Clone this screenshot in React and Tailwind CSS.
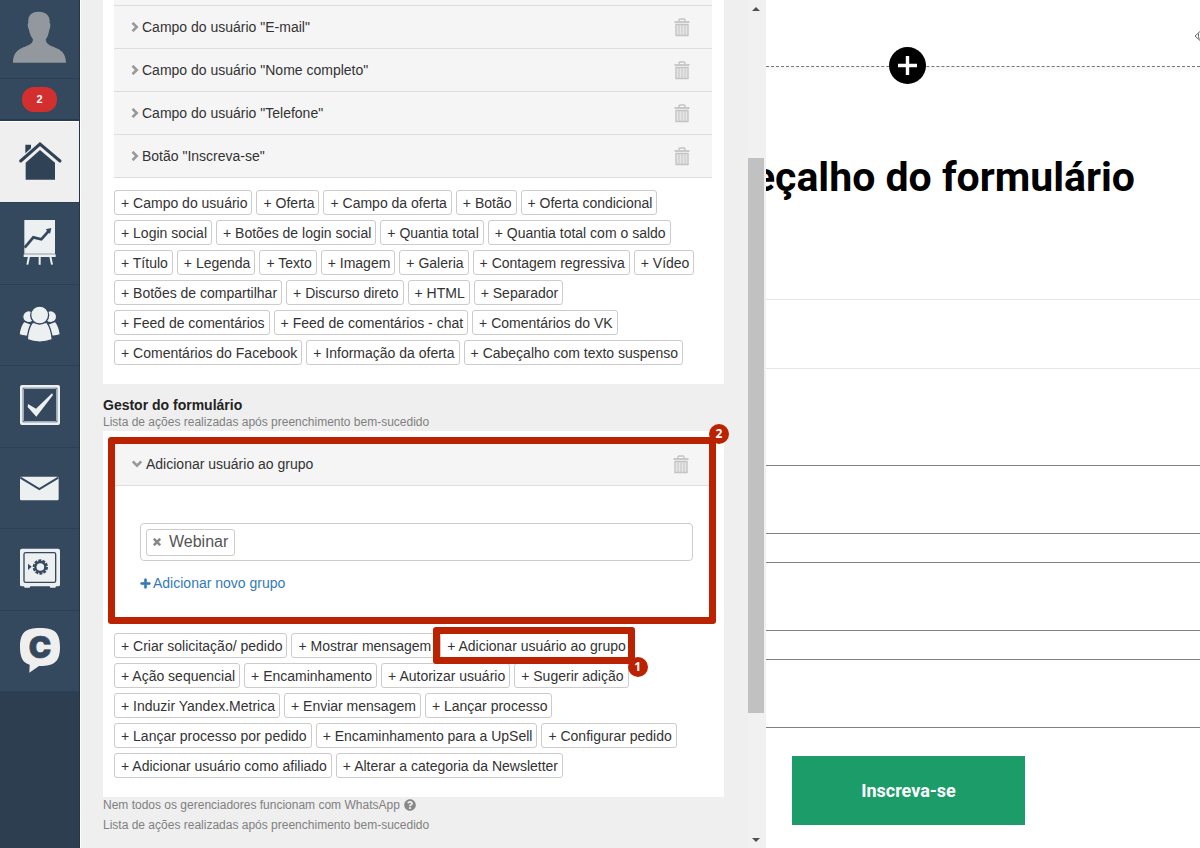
import { useState } from "react";
import { FaPlus, FaQuestionCircle } from "react-icons/fa";

const fields = [
  'Campo do usuário "E-mail"',
  'Campo do usuário "Nome completo"',
  'Campo do usuário "Telefone"',
  'Botão "Inscreva-se"',
];

const blockRows = [
  ["Campo do usuário", "Oferta", "Campo da oferta", "Botão", "Oferta condicional"],
  ["Login social", "Botões de login social", "Quantia total", "Quantia total com o saldo"],
  ["Título", "Legenda", "Texto", "Imagem", "Galeria", "Contagem regressiva", "Vídeo"],
  ["Botões de compartilhar", "Discurso direto", "HTML", "Separador"],
  ["Feed de comentários", "Feed de comentários - chat", "Comentários do VK"],
  ["Comentários do Facebook", "Informação da oferta", "Cabeçalho com texto suspenso"],
];

const handlerRows = [
  ["Criar solicitação/ pedido", "Mostrar mensagem", "Adicionar usuário ao grupo"],
  ["Ação sequencial", "Encaminhamento", "Autorizar usuário", "Sugerir adição"],
  ["Induzir Yandex.Metrica", "Enviar mensagem", "Lançar processo"],
  ["Lançar processo por pedido", "Encaminhamento para a UpSell", "Configurar pedido"],
  ["Adicionar usuário como afiliado", "Alterar a categoria da Newsletter"],
];

// Sidebar icons share one 240x243 canvas, the shape of a menu cell
const HomeIcon = () => (
  <>
    <path d="M76 71h17v11l-17 15z" fill="#2f4256" />
    <path d="M77 176v-51l43-38 45 38v51z" fill="#2f4256" />
    <path d="M62 120l58-51 60 51" fill="none" stroke="#2f4256" strokeWidth="9" strokeLinecap="round" />
  </>
);

const ChartIcon = () => (
  <>
    <path d="M73 54h92v101H73zM71 157h96v8H71z" fill="#ecf0f1" />
    <path d="M87 163l-5 25M119 163v25M151 163l5 25" stroke="#ecf0f1" strokeWidth="6" />
    <path d="M74 137l26-31 24 6 22-25" fill="none" stroke="#34495e" strokeWidth="8" />
    <path d="M137 82l17-4-4 18z" fill="#34495e" />
  </>
);

const UsersIcon = () => (
  <g fill="#ecf0f1" stroke="#34495e" strokeWidth="4">
    <circle cx="86" cy="98" r="18" />
    <circle cx="152" cy="98" r="18" />
    <path d="M72 112c-9 10-13 24-15 40 9 4 18 5 27 4l10-36z" />
    <path d="M166 112c9 10 13 24 15 40-9 4-18 5-27 4l-10-36z" />
    <path d="M97 116c-9 12-14 31-15 51 22 9 52 9 75 0-2-20-7-39-16-51z" />
    <circle cx="119" cy="93" r="27" />
  </g>
);

const CheckIcon = () => (
  <>
    <rect x="64" y="64" width="112" height="112" rx="2" fill="none" stroke="#ecf0f1" strokeWidth="8" />
    <rect x="70" y="70" width="100" height="100" rx="4" fill="none" stroke="#b4bec7" strokeWidth="3" />
    <path d="M84 117l24 14 48-46 3 5-50 65-26-29z" fill="#ecf0f1" />
  </>
);

const MailIcon = () => (
  <>
    <rect x="60" y="89" width="116" height="71" rx="4" fill="#ecf0f1" />
    <path d="M61 92l57 34 57-34" fill="none" stroke="#34495e" strokeWidth="6" />
  </>
);

const SafeIcon = () => (
  <>
    <path d="M66 62h108q6 0 6 6v102q0 5-5 5h-7l-2 4h-15l-2-4H91l-2 4H74l-2-4h-7q-5 0-5-5V68q0-6 6-6z" fill="#ecf0f1" />
    <rect x="72" y="74" width="95" height="89" rx="5" fill="none" stroke="#34495e" strokeWidth="4" />
    <circle cx="121" cy="117" r="15" fill="none" stroke="#34495e" strokeWidth="7" />
    <circle cx="121" cy="117" r="20" fill="none" stroke="#34495e" strokeWidth="6" strokeDasharray="9 3.5" />
    <path d="M84 107l11 9-11 10z" fill="#34495e" />
  </>
);

const ChatIcon = () => (
  <>
    <path d="M120 54c44 0 60 14 60 57s-16 57-60 57h-3l-29 20 1-24c-21-6-29-22-29-53 0-43 16-57 60-57z" fill="#efefef" />
    <text x="120" y="144" textAnchor="middle" fontFamily="Inter, sans-serif" fontWeight="900" fontSize="90" fill="#34495e" stroke="#34495e" strokeWidth="2">C</text>
  </>
);

const menu = [
  { label: "Início", Icon: HomeIcon, active: true },
  { label: "Estatísticas", Icon: ChartIcon },
  { label: "Usuários", Icon: UsersIcon },
  { label: "Tarefas", Icon: CheckIcon },
  { label: "Mensagens", Icon: MailIcon },
  { label: "Pagamentos", Icon: SafeIcon },
  { label: "Chat", Icon: ChatIcon },
];

const Sidebar = () => (
  <aside className="w-20 shrink-0 bg-[#2d3e50] border-r border-[#22354a]">
    <a href="#perfil" aria-label="Perfil" className="block h-[79px] bg-[#34495e] border-b border-[#2c3f53]">
      <svg viewBox="0 0 240 234" className="w-20 h-[78px]">
        <path
          d="M115 35c-22 0-32 13-30 34-3 2-2 12 2 20 2 12 6 21 12 29 0 8-4 13-14 18-22 10-45 14-46 52h159c-1-38-26-42-46-51-9-4-14-11-15-18 6-9 9-18 11-30 4-8 4-18 1-20 2-21-10-34-34-34z"
          fill="#92989d"
        />
      </svg>
    </a>
    <a href="#avisos" className="flex h-[42px] items-center justify-center bg-[#34495e] border-b-2 border-[#263a50]">
      <span className="flex h-[25px] w-[35px] items-center justify-center rounded-xl bg-[#d32f2f] text-[11px] font-bold text-white">2</span>
    </a>
    <nav className="flex h-[570px] flex-col">
      {menu.map(({ label, Icon, active }) => (
        <a
          key={label}
          href="#menu"
          aria-label={label}
          className={
            active
              ? "block flex-1 border-t border-white bg-[#efefef]"
              : "block flex-1 border-t border-[#2c3f53] bg-[#34495e]"
          }
        >
          <svg viewBox="0 3 240 240" className="size-20">
            <Icon />
          </svg>
        </a>
      ))}
    </nav>
  </aside>
);

const Trash = () => (
  <button type="button" aria-label="Excluir" className="text-[#c4c4c4]">
    <svg viewBox="0 0 16 19" className="h-[19px] w-4" fill="none" stroke="currentColor">
      <path d="M5 3.500V2q0-1 1-1h4q1 0 1 1v1.500" strokeWidth="1.4" />
      <path d="M0.500 4h15" strokeWidth="1.8" />
      <path d="M2 6.500h12v11h-12z" fill="#e6e6e6" strokeWidth="1.4" />
      <path d="M5 6.500v11M8 6.500v11M11 6.500v11" strokeWidth="1" />
    </svg>
  </button>
);

const Chevron = ({ open }) => (
  <svg viewBox="0 0 10 10" className={open ? "size-2.5 rotate-90" : "size-2.5"} fill="none" stroke="#999" strokeWidth="2.6">
    <path d="M2.500 0.800l4.200 4.200-4.200 4.200" />
  </svg>
);

// Red frame with a step number; the parent places both
const Marker = ({ step, frame, badge }) => (
  <div className={`pointer-events-none absolute z-10 rounded-[3px] border-7 border-[#bb2200] ${frame}`}>
    <span className={`absolute flex size-5 items-center justify-center rounded-full bg-[#bb2200] font-['Open_Sans',sans-serif] text-xs font-bold text-white ${badge}`}>
      {step}
    </span>
  </div>
);

const AddButton = ({ label }) => (
  <button type="button" className="h-[25px] rounded-[3px] border border-[#ccc] bg-white pr-1 pl-1.5 text-sm leading-5 whitespace-nowrap">
    + {label}
  </button>
);

const ButtonRows = ({ rows, marked }) => (
  <div className="flex flex-col gap-[5px]">
    {rows.map((row, i) => (
      <div key={i} className="flex gap-1">
        {row.map((label) =>
          label === marked ? (
            <div key={label} className="relative flex">
              <AddButton label={label} />
              <Marker step="1" frame="-inset-y-1.5 -left-[7px] -right-1" badge="-right-5 -bottom-5" />
            </div>
          ) : (
            <AddButton key={label} label={label} />
          )
        )}
      </div>
    ))}
  </div>
);

const Editor = () => {
  const [groups, setGroups] = useState(["Webinar"]);

  return (
    <main className="flex-1 pl-[22px] pr-6 text-[#333]">
      <section className="bg-white pt-0 pb-[19px] pl-[11px] pr-3">
        <div className="h-1.5 border-b border-[#ddd] bg-[#f5f5f5]" />
        {fields.map((f) => (
          <div key={f} className="flex h-[43px] items-center gap-0.5 border-b border-[#ddd] bg-[#f5f5f5] pl-4 pr-[22px] text-sm">
            <Chevron />
            <span className="flex-1">{f}</span>
            <Trash />
          </div>
        ))}
        <div className="mt-3">
          <ButtonRows rows={blockRows} />
        </div>
      </section>

      <h2 className="pt-3 text-sm leading-[18px] font-bold text-[#222]">Gestor do formulário</h2>
      <p className="mb-px text-xs leading-4 text-[#808080]">Lista de ações realizadas após preenchimento bem-sucedido</p>

      <section className="bg-white pt-3 pb-[19px] pl-[11px] pr-3">
        <div className="relative">
          <div className="flex h-[43px] items-center gap-1 border-b border-[#ddd] bg-[#f5f5f5] pl-[18px] pr-[23px] text-sm">
            <Chevron open />
            <span className="flex-1">Adicionar usuário ao grupo</span>
            <Trash />
          </div>
          <div className="pt-[37px] pb-6 pl-[26px] pr-[19px]">
            <div className="flex h-[38px] items-center rounded border border-[#ccc] px-[5px]">
              {groups.map((g) => (
                <span key={g} className="flex h-[27px] items-center gap-2 rounded-[3px] border border-[#ccc] px-1.5 text-base text-[#555]">
                  <button type="button" aria-label={`Remover ${g}`} onClick={() => setGroups(groups.filter((x) => x !== g))}>
                    <svg viewBox="0 0 8 8" className="size-2" stroke="#888" strokeWidth="2.6">
                      <path d="M0.800 0.800l6.400 6.400M7.200 0.800L0.800 7.200" />
                    </svg>
                  </button>
                  {g}
                </span>
              ))}
              <input aria-label="Grupos" className="min-w-0 flex-1 px-1 outline-none" />
            </div>
            <a href="#novo-grupo" className="mt-3 flex items-center gap-0.5 text-sm leading-5 text-[#337ab7]">
              <FaPlus className="size-[11px]" stroke="currentColor" strokeWidth="30" />
              Adicionar novo grupo
            </a>
          </div>
          <Marker step="2" frame="-top-1.5 -right-1 -bottom-[7px] -left-1.5" badge="-top-5 -right-5" />
        </div>
        <div className="mt-4">
          <ButtonRows rows={handlerRows} marked="Adicionar usuário ao grupo" />
        </div>
      </section>

      <p className="flex items-center gap-1 text-xs leading-4 text-[#808080]">
        Nem todos os gerenciadores funcionam com WhatsApp
        <FaQuestionCircle className="size-3 text-[#888]" />
      </p>
      <p className="mt-1 text-xs leading-4 text-[#808080]">Lista de ações realizadas após preenchimento bem-sucedido</p>
    </main>
  );
};

const Scrollbar = () => (
  <div aria-hidden="true" className="flex w-[18px] flex-col bg-[#f1f1f1] pr-0.5">
    <div className="flex h-[17px] items-center justify-center">
      <svg viewBox="0 0 8 4" className="h-1 w-2"><path d="M0 4l4-4 4 4z" fill="#505050" /></svg>
    </div>
    <div className="flex-[141]" />
    <div className="flex-[555] bg-[#c1c1c1]" />
    <div className="flex-[118]" />
    <div className="flex h-[17px] items-center justify-center">
      <svg viewBox="0 0 8 4" className="h-1 w-2"><path d="M0 0l4 4 4-4z" fill="#505050" /></svg>
    </div>
  </div>
);

const Preview = () => (
  <section className="min-w-0 flex-1 overflow-hidden bg-white font-[Roboto,sans-serif]">
    <div className="relative flex h-[67px] items-start justify-end border-b border-dashed border-[#777] pt-[29px] shadow-[0_3px_4px_#0000000a]">
      <svg viewBox="0 0 6 14" className="h-3.5 w-1.5" fill="none" stroke="#666">
        <path d="M6 2.500L1 7l5 4.500M4.500 4.500v3q0 2 1.500 3" />
      </svg>
      <button
        type="button"
        aria-label="Adicionar bloco"
        className="absolute -bottom-[18px] left-[123px] flex size-[37px] items-center justify-center rounded-full bg-black"
      >
        <svg viewBox="0 0 19 19" className="size-[19px]" stroke="#fff" strokeWidth="3.4">
          <path d="M9.500 0v19M0 9.500h19" />
        </svg>
      </button>
    </div>
    <div className="flex justify-end pt-[86px] pr-[65px]">
      <h1 className="text-[41px] leading-[48px] font-bold whitespace-nowrap text-black">Cabeçalho do formulário</h1>
    </div>
    <div className="mt-[98px] h-[70px] border-y border-[#e6e6e6]" />
    <div className="mt-24 flex flex-col gap-7">
      <input aria-label="E-mail" className="h-[69px] w-full border-y border-[#808080] outline-none" />
      <input aria-label="Nome completo" className="h-[69px] w-full border-y border-[#808080] outline-none" />
      <input aria-label="Telefone" className="h-[69px] w-full border-y border-[#808080] outline-none" />
    </div>
    <button type="button" className="mt-7 ml-[26px] h-[69px] w-[233px] bg-[#1c9c69] text-lg font-bold text-white">
      Inscreva-se
    </button>
  </section>
);

export default function App() {
  return (
    <div className="flex min-h-screen bg-white font-['Liberation_Sans',Arial,sans-serif]">
      <Sidebar />
      <div className="flex w-[686px] shrink-0 border-l border-white bg-[#efefef]">
        <Editor />
        <Scrollbar />
      </div>
      <Preview />
    </div>
  );
}
